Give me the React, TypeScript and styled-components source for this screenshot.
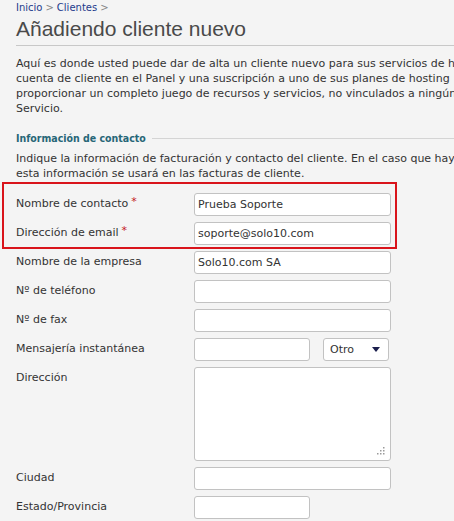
import React from "react";
import styled, { createGlobalStyle } from "styled-components";

const GlobalStyle = createGlobalStyle`
  html, body {
    margin: 0;
    padding: 0;
    background: #f4f4f4;
    overflow: hidden;
  }
  body {
    font-family: "DejaVu Sans", Verdana, sans-serif;
    font-size: 11px;
    color: #333;
  }
`;

const Page = styled.div`
  width: 560px;
  padding: 2px 0 0 16px;
`;

const Breadcrumb = styled.div`
  font-size: 10px;
  line-height: 12px;
  color: #1d3b8c;

  span {
    color: #888;
    margin: 0 3px;
  }
`;

const Title = styled.h1`
  margin: 2px 0 0;
  font-family: "Liberation Sans", Arial, sans-serif;
  font-weight: normal;
  font-size: 21px;
  line-height: 25px;
  color: #4a4a4a;
  padding-bottom: 4px;
  border-bottom: 1px solid #c8c8c8;
`;

const Intro = styled.p`
  margin: 10px 0 0;
  line-height: 15px;
  white-space: nowrap;
`;

const SectionHead = styled.div`
  display: flex;
  align-items: center;
  gap: 6px;
  margin-top: 15px;
  font-family: "DejaVu Sans Condensed", "DejaVu Sans", sans-serif;
  font-size: 10.5px;
  font-weight: bold;
  color: #266677;
  line-height: 15px;

  &::after {
    content: "";
    flex: 1;
    height: 1px;
    background: #d4d4d4;
  }
`;

const Hint = styled.p`
  margin: 5px 0 0;
  line-height: 15px;
  white-space: nowrap;
`;

const Form = styled.div`
  display: flex;
  flex-direction: column;
  gap: 6px;
  margin-top: 1px;
`;

const Highlight = styled.div`
  display: flex;
  flex-direction: column;
  gap: 6px;
  width: 379px;
  margin-left: -14px;
  margin-bottom: -4px;
  padding: 9px 0 2px 12px;
  border: 2px solid #d9141b;
`;

const Row = styled.div`
  display: grid;
  grid-template-columns: 178px auto;
  align-items: start;
`;

const Label = styled.label`
  padding-top: 4px;
  line-height: 14px;
`;

const Req = styled.span`
  color: #c41a22;
  margin-left: 3px;
  position: relative;
  top: -2px;
`;

const Field = styled.div`
  display: flex;
  gap: 13px;
`;

const TextInput = styled.input<{ $w?: number }>`
  box-sizing: border-box;
  width: ${p => p.$w ?? 197}px;
  height: 23px;
  padding: 0 3px;
  border: 1px solid #c2c2c2;
  border-radius: 3px;
  background: #fff;
  font-family: "DejaVu Sans", Verdana, sans-serif;
  font-size: 11px;
  color: #333;
  outline: none;
`;

const SelectBox = styled.div`
  box-sizing: border-box;
  width: 66px;
  height: 23px;
  display: flex;
  align-items: center;
  justify-content: space-between;
  padding: 0 8px 0 6px;
  border: 1px solid #c2c2c2;
  border-radius: 3px;
  background: #fff;
  color: #333;
`;

const AreaWrap = styled.div`
  position: relative;
  width: 197px;
  height: 94px;
`;

const Area = styled.textarea`
  box-sizing: border-box;
  width: 197px;
  height: 94px;
  border: 1px solid #c2c2c2;
  border-radius: 3px;
  background: #fff;
  resize: none;
  outline: none;
`;

const Grip = styled.svg`
  position: absolute;
  right: 6px;
  bottom: 6px;
`;

export default function App() {
  return (
    <Page>
      <GlobalStyle />
      <Breadcrumb>
        Inicio<span>&gt;</span>Clientes<span>&gt;</span>
      </Breadcrumb>
      <Title>Añadiendo cliente nuevo</Title>
      <Intro>
        Aquí es donde usted puede dar de alta un cliente nuevo para sus servicios de hosting.
        <br />
        cuenta de cliente en el Panel y una suscripción a uno de sus planes de hosting
        <br />
        proporcionar un completo juego de recursos y servicios, no vinculados a ningún
        <br />
        Servicio.
      </Intro>
      <SectionHead>Información de contacto</SectionHead>
      <Hint>
        Indique la información de facturación y contacto del cliente. En el caso que haya
        <br />
        esta información se usará en las facturas de cliente.
      </Hint>
      <Form>
        <Highlight>
          <Row>
            <Label>
              Nombre de contacto<Req>*</Req>
            </Label>
            <TextInput defaultValue="Prueba Soporte" />
          </Row>
          <Row>
            <Label>
              Dirección de email<Req>*</Req>
            </Label>
            <TextInput defaultValue="soporte@solo10.com" />
          </Row>
        </Highlight>
        <Row>
          <Label>Nombre de la empresa</Label>
          <TextInput defaultValue="Solo10.com SA" />
        </Row>
        <Row>
          <Label>Nº de teléfono</Label>
          <TextInput />
        </Row>
        <Row>
          <Label>Nº de fax</Label>
          <TextInput />
        </Row>
        <Row>
          <Label>Mensajería instantánea</Label>
          <Field>
            <TextInput $w={116} />
            <SelectBox>
              Otro
              <svg width="8" height="5" viewBox="0 0 8 5">
                <path d="M0 0h8L4 5z" fill="#1b1f4d" />
              </svg>
            </SelectBox>
          </Field>
        </Row>
        <Row>
          <Label>Dirección</Label>
          <AreaWrap>
            <Area />
            <Grip width="9" height="9" viewBox="0 0 9 9">
              {[
                [7, 1],
                [7, 4],
                [4, 4],
                [7, 7],
                [4, 7],
                [1, 7],
              ].map(([x, y]) => (
                <rect key={`${x}-${y}`} x={x} y={y} width="1.5" height="1.5" fill="#9a9a9a" />
              ))}
            </Grip>
          </AreaWrap>
        </Row>
        <Row>
          <Label>Ciudad</Label>
          <TextInput />
        </Row>
        <Row>
          <Label>Estado/Provincia</Label>
          <TextInput $w={116} />
        </Row>
      </Form>
    </Page>
  );
}
